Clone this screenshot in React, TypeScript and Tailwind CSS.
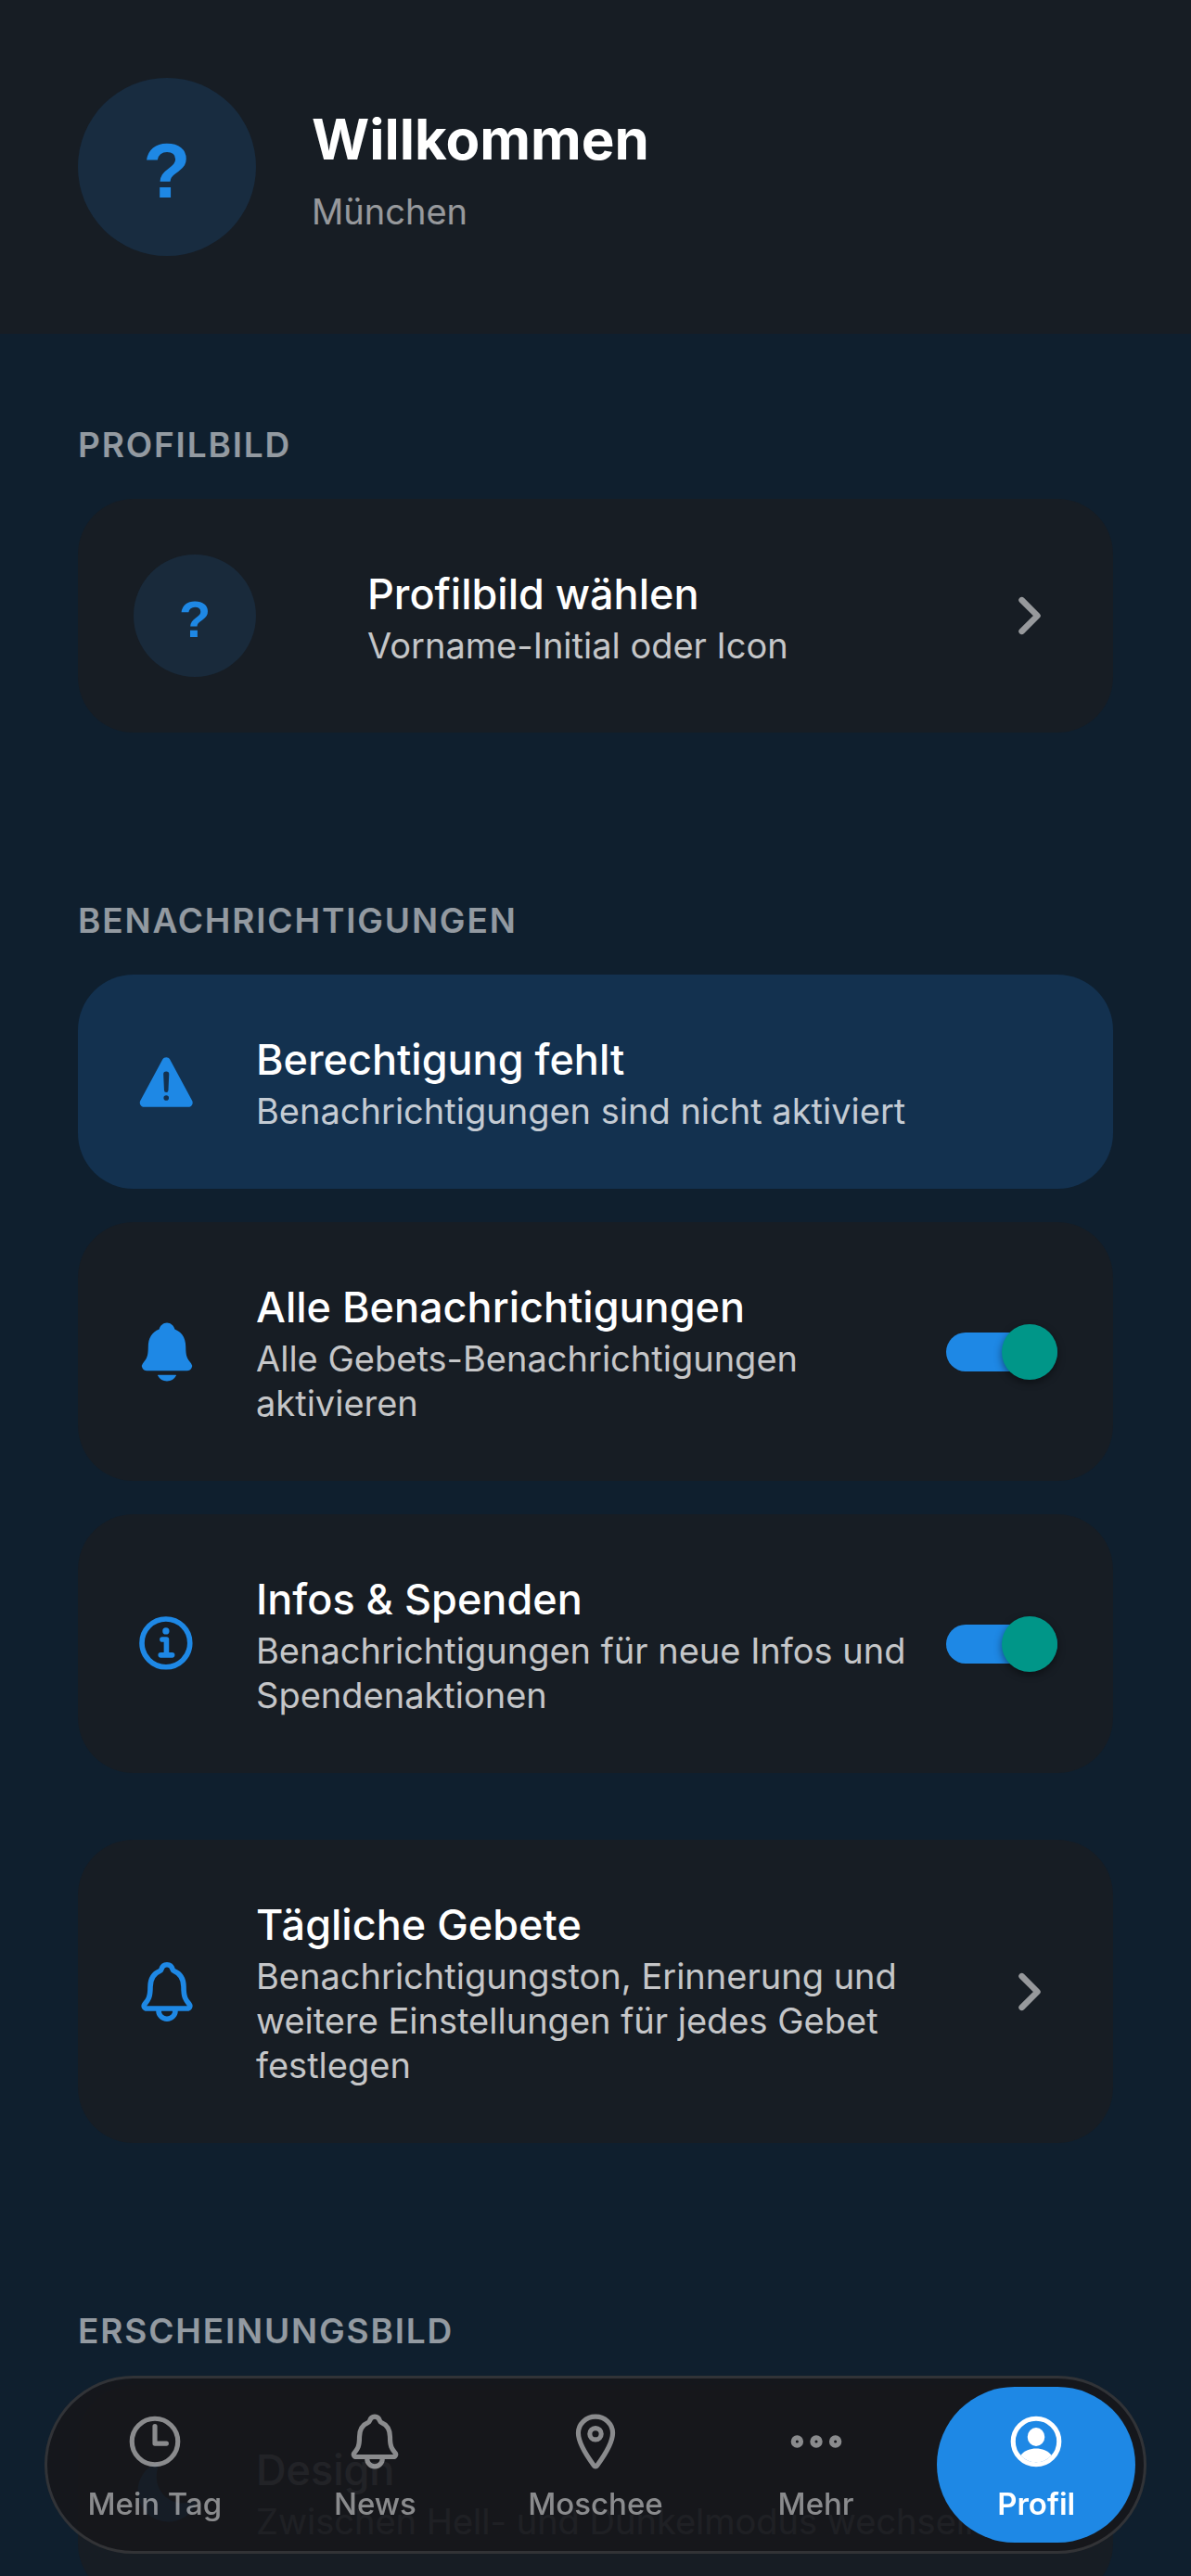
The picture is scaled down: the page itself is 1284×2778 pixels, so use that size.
import { useState } from "react";
import type { ReactNode } from "react";
import {
  IoChevronForward,
  IoEllipsisHorizontalOutline,
  IoInformationCircleOutline,
  IoLocationOutline,
  IoMoon,
  IoNotifications,
  IoNotificationsOutline,
  IoTimeOutline,
  IoWarning,
} from "react-icons/io5";

const outlineStroke = "[&_[fill=none]]:[stroke-width:40px]";

function PersonCircle({ className }: { className?: string }) {
  return (
    <svg viewBox="0 0 512 512" className={className} aria-hidden="true">
      <circle cx="256" cy="256" r="192" fill="none" stroke="currentColor" strokeWidth="40" />
      <ellipse cx="256" cy="217" rx="72" ry="77" fill="currentColor" />
      <path d="M127 372C158 332 207 315 256 315s98 17 129 57A174 174 0 0 1 127 372z" fill="currentColor" />
    </svg>
  );
}

function Section({ title, children }: { title: string; children: ReactNode }) {
  return (
    <section className="flex flex-col">
      <h2 className="mb-[34px] text-[37px] leading-[48px] font-semibold tracking-wider text-white/55 uppercase">
        {title}
      </h2>
      {children}
    </section>
  );
}

function RowText({ title, detail }: { title: string; detail: string }) {
  return (
    <span className="flex min-w-0 flex-1 flex-col text-left">
      <span className="text-[45px] leading-[63px] font-medium text-white">{title}</span>
      <span className="text-[38px] leading-[48px] text-white/75">{detail}</span>
    </span>
  );
}

function RowIcon({ children }: { children: ReactNode }) {
  return (
    <span className="mr-[60px] flex w-[72px] shrink-0 justify-center text-[72px] text-[#1e88e5]">{children}</span>
  );
}

function Chevron() {
  return <IoChevronForward className="ml-6 size-[60px] shrink-0 text-white/55 [&_*]:[stroke-width:56px]" />;
}

function SwitchRow({ icon, title, detail }: { icon: ReactNode; title: string; detail: string }) {
  const [on, setOn] = useState(true);
  return (
    <label className="flex items-center rounded-[60px] bg-[#171d24] p-[60px]">
      <RowIcon>{icon}</RowIcon>
      <RowText title={title} detail={detail} />
      <span className="relative ml-6 flex h-[60px] w-[120px] shrink-0 items-center">
        <input
          type="checkbox"
          role="switch"
          checked={on}
          onChange={(e) => setOn(e.target.checked)}
          className="peer sr-only"
        />
        <span className="h-[42px] w-full rounded-full bg-gray-600 peer-checked:bg-[#1e88e5]" />
        <span className="absolute left-0 size-[60px] rounded-full bg-gray-300 shadow-[0_3px_8px_rgba(0,0,0,0.45)] peer-checked:right-0 peer-checked:left-auto peer-checked:bg-[#009688]" />
      </span>
    </label>
  );
}

const tabs = [
  { label: "Mein Tag", icon: IoTimeOutline },
  { label: "News", icon: IoNotificationsOutline },
  { label: "Moschee", icon: IoLocationOutline },
  { label: "Mehr", icon: IoEllipsisHorizontalOutline },
  { label: "Profil", icon: PersonCircle, active: true },
];

export default function App() {
  return (
    <div className="min-h-screen bg-[#0f1f2e] font-[Inter,sans-serif] text-white">
      <header className="flex items-center gap-[60px] bg-[#171d24] p-[84px]">
        <div className="flex size-[192px] shrink-0 items-center justify-center rounded-full bg-[#182c40] pt-2 font-['Liberation_Sans',sans-serif] text-[84px] font-bold text-[#1e88e5]">
          ?
        </div>
        <div className="flex flex-col gap-2">
          <h1 className="text-[60px] leading-[88px] font-bold">Willkommen</h1>
          <p className="text-[38px] leading-[52px] text-white/55">München</p>
        </div>
      </header>

      <main className="flex flex-col gap-[179px] px-[84px] pt-[96px]">
        <Section title="Profilbild">
          <button type="button" className="flex items-center rounded-[60px] bg-[#171d24] p-[60px]">
            <span className="mr-[120px] flex size-[132px] shrink-0 items-center justify-center rounded-full bg-[#192a3b] pt-2 font-['Liberation_Sans',sans-serif] text-[56px] font-bold text-[#1e88e5]">
              ?
            </span>
            <RowText title="Profilbild wählen" detail="Vorname-Initial oder Icon" />
            <Chevron />
          </button>
        </Section>

        <Section title="Benachrichtigungen">
          <div className="flex flex-col gap-9">
            <button type="button" className="flex items-center rounded-[60px] bg-[#13314f] p-[60px]">
              <RowIcon>
                <IoWarning />
              </RowIcon>
              <RowText title="Berechtigung fehlt" detail="Benachrichtigungen sind nicht aktiviert" />
            </button>
            <SwitchRow
              icon={<IoNotifications />}
              title="Alle Benachrichtigungen"
              detail="Alle Gebets-Benachrichtigungen aktivieren"
            />
            <SwitchRow
              icon={<IoInformationCircleOutline className={outlineStroke} />}
              title="Infos & Spenden"
              detail="Benachrichtigungen für neue Infos und Spendenaktionen"
            />
            <button type="button" className="mt-9 flex items-center rounded-[60px] bg-[#171d24] p-[60px]">
              <RowIcon>
                <IoNotificationsOutline className={outlineStroke} />
              </RowIcon>
              <RowText
                title="Tägliche Gebete"
                detail="Benachrichtigungston, Erinnerung und weitere Einstellungen für jedes Gebet festlegen"
              />
              <Chevron />
            </button>
          </div>
        </Section>

        <Section title="Erscheinungsbild">
          <button type="button" className="flex items-center rounded-[60px] bg-[#171d24] p-[60px]">
            <RowIcon>
              <IoMoon />
            </RowIcon>
            <RowText title="Design" detail="Zwischen Hell- und Dunkelmodus wechseln" />
          </button>
        </Section>
      </main>

      <nav className="fixed inset-x-12 bottom-6 flex gap-6 rounded-full border-[3px] border-white/12 bg-[#16171b]/95 p-[9px]">
        {tabs.map(({ label, icon: Icon, active }) => (
          <a
            key={label}
            href="#"
            aria-current={active ? "page" : undefined}
            className={
              active
                ? "flex h-[168px] min-w-0 flex-1 flex-col items-center justify-center gap-3 rounded-full bg-[#1e88e5] pt-1.5 font-semibold text-white"
                : "flex h-[168px] min-w-0 flex-1 flex-col items-center justify-center gap-3 rounded-full pt-1.5 font-medium text-white/50"
            }
          >
            <Icon className={active ? "size-[66px]" : "size-[66px] [&_*]:[stroke-width:40px]"} />
            <span className="text-[33px] leading-[44px] whitespace-nowrap">{label}</span>
          </a>
        ))}
      </nav>
    </div>
  );
}
